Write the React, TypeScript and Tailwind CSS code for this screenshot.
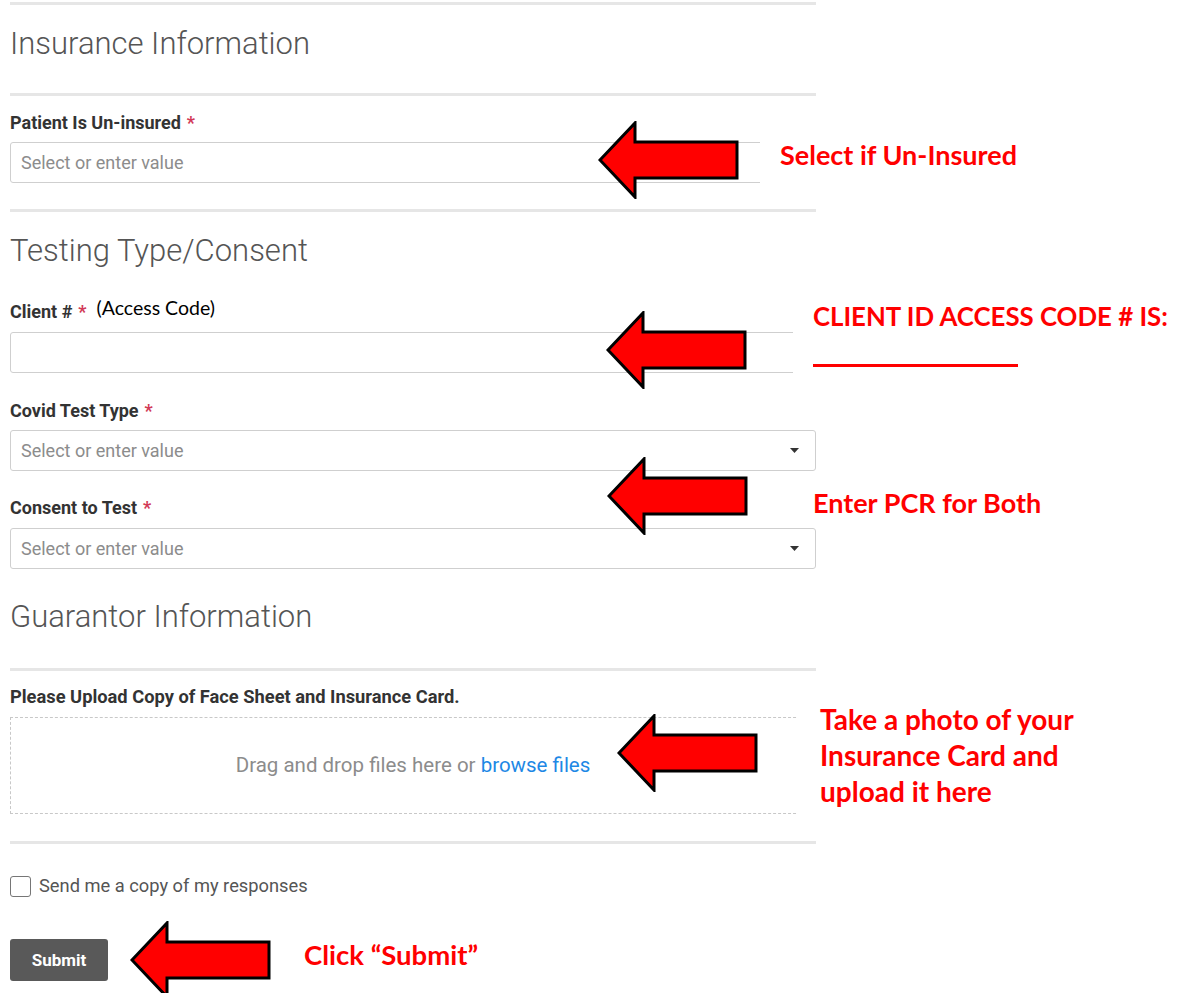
const arrowPoints = "2,39 37,2 37,21 139,21 139,57 37,57 37,76";

// Red callout arrow pointing left
function Arrow({ x, y }: { x: number; y: number }) {
  return (
    <svg
      width={142}
      height={78}
      viewBox="0 0 142 78"
      className="absolute"
      style={{ left: x - 2, top: y - 39 }}
    >
      <polygon points={arrowPoints} fill="#ff0000" stroke="#000" strokeWidth={3} strokeLinejoin="miter" />
    </svg>
  );
}

function Divider({ className = "" }: { className?: string }) {
  return <div className={`h-[3px] w-full bg-[#e6e6e6] ${className}`} />;
}

function Heading({ children, className = "" }: { children: React.ReactNode; className?: string }) {
  return <h2 className={`text-[31px] font-light leading-[34px] text-[#555] ${className}`}>{children}</h2>;
}

function Label({ children, className = "" }: { children: React.ReactNode; className?: string }) {
  return (
    <div className={`flex items-center h-5 text-[18px] font-bold leading-5 text-[#333] ${className}`}>
      {children}
      <span className="ml-[6px] text-[#d23a57]">*</span>
    </div>
  );
}

function Field({ placeholder, caret, className = "" }: { placeholder?: string; caret?: boolean; className?: string }) {
  return (
    <div
      className={`flex h-[41px] w-full items-center justify-between rounded-[3px] border border-[#cfcfcf] bg-white pl-[10px] pr-[16px] ${className}`}
    >
      <span className="text-[18px] text-[#8c8c8c]">{placeholder}</span>
      {caret && (
        <svg width="9" height="5" viewBox="0 0 9 5">
          <polygon points="0,0 9,0 4.5,5" fill="#333" />
        </svg>
      )}
    </div>
  );
}

const note = "absolute font-['Lato',sans-serif] font-bold leading-[32px] text-[#ff0000] whitespace-nowrap";

export default function App() {
  return (
    <div className="relative h-[993px] w-[1178px] overflow-hidden bg-white font-['Roboto',sans-serif]">
      <div className="ml-[10px] flex w-[806px] flex-col">
        <Divider className="mt-[2px]" />
        <Heading className="mt-[22px]">Insurance Information</Heading>
        <Divider className="mt-[32px]" />

        <Label className="mt-[17px]">Patient Is Un-insured</Label>
        <Field className="mt-[9px]" placeholder="Select or enter value" caret />
        <Divider className="mt-[26px]" />

        <Heading className="mt-[22px]">Testing Type/Consent</Heading>

        <div className="mt-[34px] flex h-5 items-center">
          <Label>Client #</Label>
          <span className="relative -top-[4px] ml-[10px] font-['Lato',sans-serif] text-[19.5px] text-black">(Access Code)</span>
        </div>
        <Field className="mt-[10px]" />

        <Label className="mt-[28px]">Covid Test Type</Label>
        <Field className="mt-[9px]" placeholder="Select or enter value" caret />

        <Label className="mt-[27px]">Consent to Test</Label>
        <Field className="mt-[10px]" placeholder="Select or enter value" caret />

        <Heading className="mt-[31px]">Guarantor Information</Heading>
        <Divider className="mt-[34px]" />

        <div className="mt-[16px] h-5 text-[18.3px] font-bold leading-5 text-[#333]">
          Please Upload Copy of Face Sheet and Insurance Card.
        </div>
        <div className="mt-[10px] flex h-[97px] items-center justify-center border border-dashed border-[#c8c8c8]">
          <span className="text-[20.5px] text-[#8c8c8c]">
            Drag and drop files here or <span className="text-[#1e88e5]">browse files</span>
          </span>
        </div>
        <Divider className="mt-[27px]" />

        <label className="mt-[31px] flex h-[22px] items-center gap-[8px]">
          <span className="h-[21px] w-[21px] rounded-[3px] border border-[#767676] bg-white" />
          <span className="text-[18.3px] text-[#555]">Send me a copy of my responses</span>
        </label>

        <button className="mt-[42px] h-[42px] w-[98px] rounded-[3px] bg-[#595959] pt-[1px] text-[17px] font-bold text-white">
          Submit
        </button>
      </div>

      {/* pasted callouts: white backing hides what sits under them */}
      <div className="absolute left-[760px] top-[120px] h-[80px] w-[300px] bg-white" />
      <div className="absolute left-[793px] top-[300px] h-[90px] w-[385px] bg-white" />
      <div className="absolute left-[797px] top-[705px] h-[125px] w-[381px] bg-white" />

      <Arrow x={600} y={160} />
      <Arrow x={608} y={350} />
      <Arrow x={609} y={496} />
      <Arrow x={619} y={753} />
      <Arrow x={132} y={960} />

      <div className={`${note} left-[780px] top-[139px] text-[27px]`}>Select if Un-Insured</div>
      <div className={`${note} left-[813px] top-[300px] text-[25.8px]`}>CLIENT ID ACCESS CODE # IS:</div>
      <div className="absolute left-[813px] top-[364px] h-[3px] w-[205px] bg-[#ff0000]" />
      <div className={`${note} left-[813px] top-[487px] text-[27px]`}>Enter PCR for Both</div>
      <div className={`${note} left-[820px] top-[701px] text-[28px] leading-[36px]`}>
        Take a photo of your
        <br />
        Insurance Card and
        <br />
        upload it here
      </div>
      <div className={`${note} left-[304px] top-[939px] text-[27.5px]`}>Click “Submit”</div>
    </div>
  );
}
